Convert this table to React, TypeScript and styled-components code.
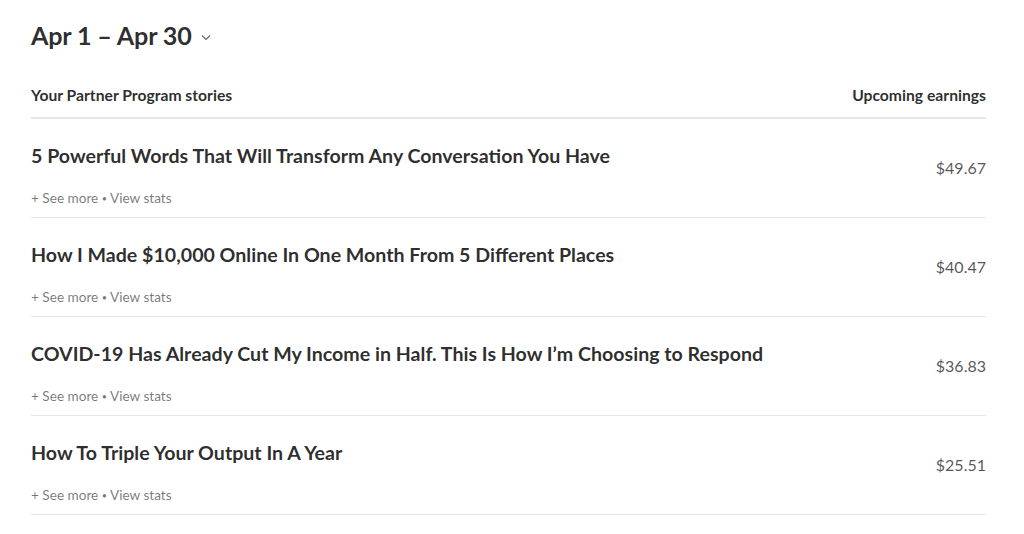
import styled, { createGlobalStyle } from "styled-components";

const stories = [
  { title: "5 Powerful Words That Will Transform Any Conversation You Have", amount: "$49.67" },
  { title: "How I Made $10,000 Online In One Month From 5 Different Places", amount: "$40.47" },
  { title: "COVID-19 Has Already Cut My Income in Half. This Is How I’m Choosing to Respond", amount: "$36.83" },
  { title: "How To Triple Your Output In A Year", amount: "$25.51" },
];

const GlobalStyle = createGlobalStyle`
  body {
    margin: 0;
    background: #fff;
    font-family: Lato, "Open Sans", sans-serif;
    color: rgba(0, 0, 0, 0.84);
  }
`;

export default function App() {
  return (
    <>
      <GlobalStyle />
      <Page>
        <RangeButton>
          Apr 1 – Apr 30
          <svg width="12" height="12" viewBox="0 0 12 12">
            <path d="M2 4.5l4 4 4-4" fill="none" stroke="#666" strokeWidth="1.1" />
          </svg>
        </RangeButton>
        <TableHead>
          <span>Your Partner Program stories</span>
          <span>Upcoming earnings</span>
        </TableHead>
        {stories.map((s) => (
          <Row key={s.title}>
            <Info>
              <Title>{s.title}</Title>
              <Meta>
                + See more <Dot>•</Dot> View stats
              </Meta>
            </Info>
            <Amount>{s.amount}</Amount>
          </Row>
        ))}
      </Page>
    </>
  );
}

const Page = styled.div`
  padding: 19px 38px 0 31px;
`;

const RangeButton = styled.div`
  display: flex;
  align-items: center;
  gap: 8px;
  font-size: 25.2px;
  font-weight: 700;
  line-height: 32px;
  height: 32px;
  letter-spacing: -0.2px;
  svg {
    margin-top: 4px;
  }
`;

const TableHead = styled.div`
  display: flex;
  justify-content: space-between;
  margin-top: 34px;
  padding-bottom: 12px;
  border-bottom: 2px solid #e6e6e6;
  font-size: 15.7px;
  font-weight: 700;
  line-height: 20px;
`;

const Row = styled.div`
  display: flex;
  justify-content: space-between;
  height: 98px;
  border-bottom: 1px solid #e6e6e6;
`;

const Info = styled.div`
  display: flex;
  flex-direction: column;
  padding-top: 23px;
`;

const Title = styled.div`
  font-size: 19.6px;
  font-weight: 700;
  line-height: 28px;
`;

const Meta = styled.div`
  margin-top: 19px;
  font-size: 13.6px;
  line-height: 18px;
  color: rgba(0, 0, 0, 0.54);
`;

const Dot = styled.span`
  font-size: 9px;
  vertical-align: 1px;
`;

const Amount = styled.div`
  align-self: center;
  font-size: 16px;
  line-height: 20px;
  color: rgba(0, 0, 0, 0.68);
`;
